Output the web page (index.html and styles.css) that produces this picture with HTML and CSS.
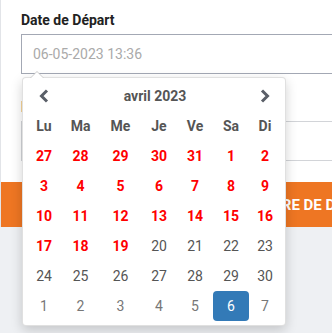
FILE: index.html
```html
<!DOCTYPE html>
<html lang="fr">
<head>
  <meta charset="UTF-8" />
  <title>Date de départ</title>
  <link rel="stylesheet" href="styles.css">
</head>
<body>
  <div class="page">
  <div class="card">
    <div class="field">
      <label for="depart">Date de Départ</label>
      <input type="text" id="depart" placeholder="06-05-2023 13:36" />

      <!-- calendrier ouvert -->
      <div class="picker">
        <div class="grid">
          <span class="nav">
            <svg width="10" height="14" viewBox="0 0 10 14"><polyline points="8,1.5 2.5,7 8,12.5" fill="none" stroke="#5a5f68" stroke-width="3" /></svg>
          </span>
          <span class="title">avril 2023</span>
          <span class="nav">
            <svg width="10" height="14" viewBox="0 0 10 14"><polyline points="2,1.5 7.5,7 2,12.5" fill="none" stroke="#5a5f68" stroke-width="3" /></svg>
          </span>

          <span class="dow">Lu</span><span class="dow">Ma</span><span class="dow">Me</span><span class="dow">Je</span><span class="dow">Ve</span><span class="dow">Sa</span><span class="dow">Di</span>

          <span class="day past">27</span><span class="day past">28</span><span class="day past">29</span><span class="day past">30</span><span class="day past">31</span><span class="day past">1</span><span class="day past">2</span>
          <span class="day past">3</span><span class="day past">4</span><span class="day past">5</span><span class="day past">6</span><span class="day past">7</span><span class="day past">8</span><span class="day past">9</span>
          <span class="day past">10</span><span class="day past">11</span><span class="day past">12</span><span class="day past">13</span><span class="day past">14</span><span class="day past">15</span><span class="day past">16</span>
          <span class="day past">17</span><span class="day past">18</span><span class="day past">19</span><span class="day">20</span><span class="day">21</span><span class="day">22</span><span class="day">23</span>
          <span class="day">24</span><span class="day">25</span><span class="day">26</span><span class="day">27</span><span class="day">28</span><span class="day">29</span><span class="day">30</span>
          <span class="day new">1</span><span class="day new">2</span><span class="day new">3</span><span class="day new">4</span><span class="day new">5</span><span class="day active">6</span><span class="day new">7</span>
        </div>
      </div>
    </div>

    <div class="field">
      <label for="retour">Date de Retour</label>
      <input type="text" id="retour" class="light" />
    </div>

    <button type="button">Calculer l'heure de départ</button>
  </div>
  </div>
</body>
</html>
```

FILE: styles.css
```css
body {
  margin: 0;
  background: #eef0f3;
  font-family: Roboto, 'Liberation Sans', sans-serif;
}
.page {
  min-height: 100vh;
  overflow: hidden;
}
.card {
  width: 544px;
  background: white;
  border-left: 1px solid #e2e4e8;
  padding-top: 10px;
}
.field {
  position: relative;
  padding-left: 20px;
  margin-bottom: 21px;
}
.field:first-child {
  margin-bottom: 23px;
}
label {
  display: block;
  font-size: 14px;
  font-weight: bold;
  color: #222;
  line-height: 20px;
  margin-bottom: 4px;
}
input[type="text"] {
  display: block;
  width: 100%;
  height: 40px;
  padding: 0 11px;
  border: 1px solid #a3a8b4;
  font-family: inherit;
  font-size: 14px;
  box-sizing: border-box;
  outline: none;
}
input::placeholder {
  color: #aaaaaa;
}
input.light {
  border-color: #d2d4d8;
}
button {
  display: block;
  width: 100%;
  height: 45px;
  border: none;
  background: #ee7623;
  color: white;
  font-family: inherit;
  font-size: 15px;
  font-weight: bold;
  text-transform: uppercase;
}

/* calendrier */
.picker {
  position: absolute;
  left: 21px;
  top: 67px;
  z-index: 10;
  width: 264px;
  padding: 3px 4px 4px;
  box-sizing: border-box;
  background: white;
  border: 1px solid rgba(0,0,0,0.12);
  border-radius: 4px;
  box-shadow: 0 4px 12px rgba(0,0,0,0.18);
}
.picker:before {
  content: '';
  position: absolute;
  top: -7px;
  left: 7px;
  border-left: 7px solid transparent;
  border-right: 7px solid transparent;
  border-bottom: 7px solid #ccc;
}
.picker:after {
  content: '';
  position: absolute;
  top: -6px;
  left: 8px;
  border-left: 6px solid transparent;
  border-right: 6px solid transparent;
  border-bottom: 6px solid white;
}
.grid {
  display: grid;
  grid-template-columns: 34px 39px 41px 36px 36px 36px 32px;
  grid-auto-rows: 30px;
  font-size: 14px;
  color: #555;
}
.grid > span {
  display: flex;
  align-items: center;
  justify-content: center;
}
.title {
  grid-column: span 5;
  font-weight: bold;
}
.dow {
  font-weight: bold;
}
.day.past {
  color: #ff0000;
  font-weight: bold;
}
.day.new {
  color: #777;
}
.day.active {
  background: #337ab7;
  color: white;
  border-radius: 4px;
}
```
